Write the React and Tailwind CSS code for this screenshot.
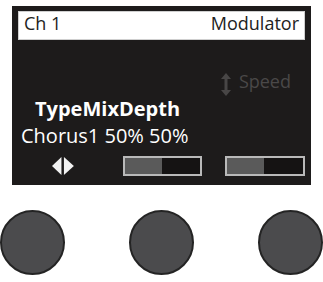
export default function App() {
  const font = { fontFamily: '"Open Sans", "Noto Sans", sans-serif' };
  return (
    <div className="w-[323px] h-[282px] bg-white overflow-hidden" style={font}>
      <div className="ml-[12px] mt-[6px] w-[299px] h-[179px] bg-[#1d1b1b] px-[6px] pt-[5px] flex flex-col">
        <div className="h-[29px] bg-white border border-[#cfcfcf] flex justify-between items-center px-[5px] pb-[5px] text-[18px] leading-none text-[#222]">
          <span>Ch 1</span>
          <span>Modulator</span>
        </div>
        <div className="mt-[32px] h-[24px] flex justify-end items-start pr-[14px]">
          <svg width="10" height="23" viewBox="0 0 10 23" className="mt-[1px]">
            <polygon points="5,0 10,6 6.5,6 6.5,17 10,17 5,23 0,17 3.5,17 3.5,6 0,6" fill="#484646" />
          </svg>
          <span className="ml-[8px] text-[18px] leading-none text-[#4a4848]">Speed</span>
        </div>
        <div className="mt-[3px] pl-[17px] text-[20px] leading-none font-bold text-white">TypeMixDepth</div>
        <div className="mt-[7px] pl-[3px] text-[20px] leading-none text-white">Chorus1 50% 50%</div>
        <div className="mt-[10px] flex items-start">
          <svg width="22" height="18" viewBox="0 0 22 18" className="ml-[34px] mt-[1px]">
            <polygon points="0,9 9.5,0 9.5,18" fill="#f2f2f2" />
            <polygon points="22,9 12,0 12,18" fill="#f2f2f2" />
          </svg>
          <div className="ml-[49px] w-[80px] h-[20px] border-2 border-[#b9b9b9] bg-[#151313] flex">
            <div className="w-[37px] h-full bg-[#5a5a5a]" />
          </div>
          <div className="ml-[23px] w-[80px] h-[20px] border-2 border-[#b9b9b9] bg-[#151313] flex">
            <div className="w-[37px] h-full bg-[#5a5a5a]" />
          </div>
        </div>
      </div>
      <div className="mt-[25px] flex justify-between">
        <div className="w-[65px] h-[65px] rounded-full bg-[#4b4b4d] border-2 border-[#242424]" />
        <div className="w-[65px] h-[65px] rounded-full bg-[#4b4b4d] border-2 border-[#242424]" />
        <div className="w-[65px] h-[65px] rounded-full bg-[#4b4b4d] border-2 border-[#242424]" />
      </div>
    </div>
  );
}
